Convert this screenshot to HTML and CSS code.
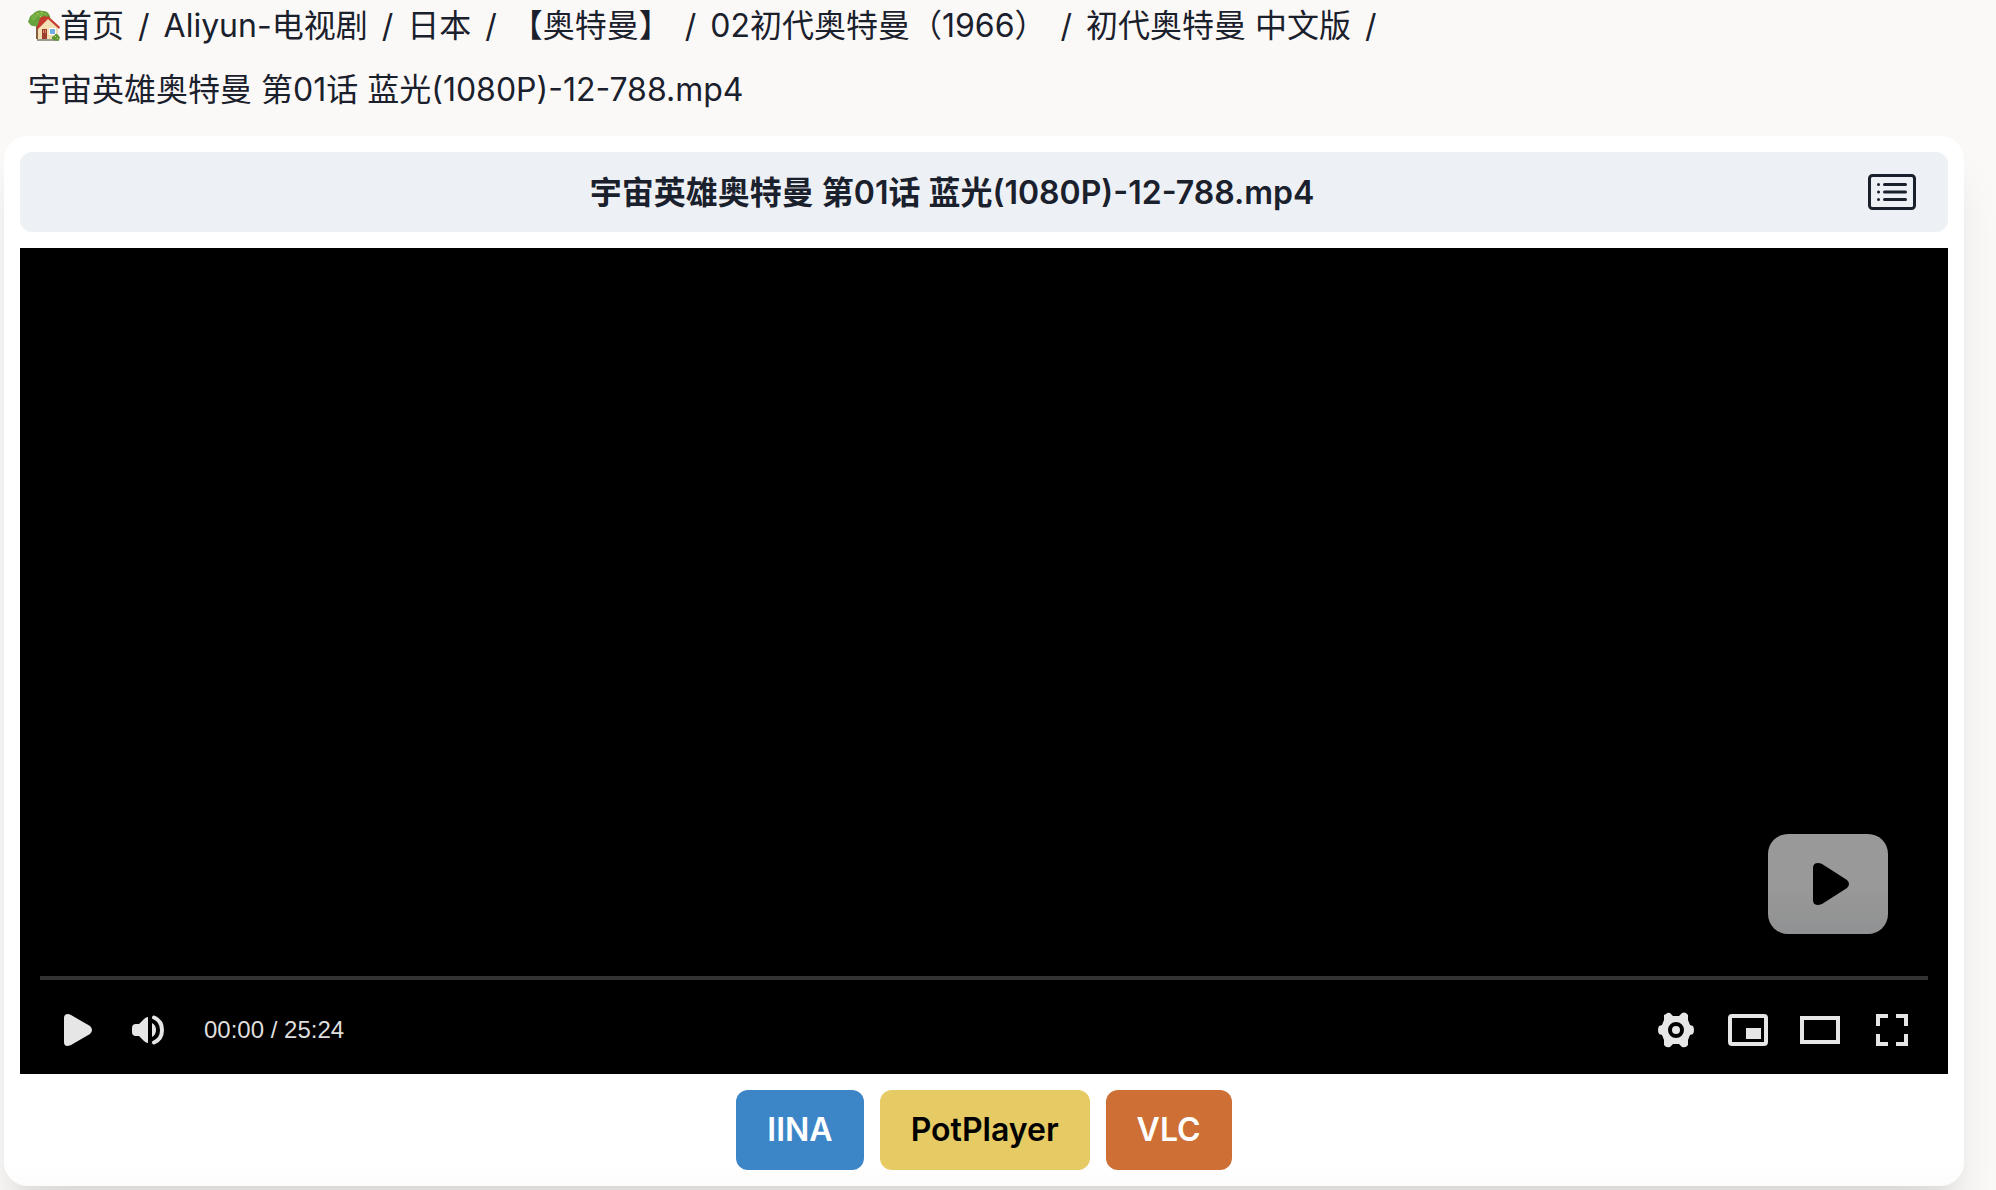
FILE: index.html
```html
<!DOCTYPE html>
<html lang="zh-CN">
<head>
<meta charset="utf-8">
<meta name="viewport" content="width=device-width, initial-scale=1">
<title>宇宙英雄奥特曼 第01话</title>
<link rel="stylesheet" href="styles.css">
</head>
<body>
<nav class="breadcrumb" aria-label="面包屑">
  <ol class="crumbs">
    <li class="crumb"><a href="#"><svg class="house" viewBox="0 0 32 32" aria-hidden="true">
      <path fill="#865a3b" d="M8 15h4v14H8z"/>
      <path fill="#67a33d" d="M1 10Q1 6 5 4Q9-1 15 1Q20 1 22 6Q23 11 19 13Q14 12 9 16Q3 17 1 13Q-1 11 1 10z"/>
      <path fill="#78b045" d="M5 5Q11 0 17 3Q14 7 9 7Q7 12 4 10Q2 8 5 5z"/>
      <path fill="#f2be4d" d="M9 3h1v1H9zM13 2h1v1h-1zM17 4h1v1h-1zM12 6h1v1h-1z"/>
      <path fill="#f4dfb5" d="M10 17L20 8l10 9v12H10z"/>
      <path fill="#c63b2d" d="M12 8l4-2 3 1 1-1 12 11-1 2L20 9 10 19l-1-2z"/>
      <path fill="#9d3f2d" d="M14 19h5v10h-5z"/>
      <path fill="#d98969" d="M15 20h1v3h-1zM17 20h1v3h-1z"/>
      <path fill="#fff" d="M21 18h7v7h-7z"/>
      <path fill="#72afe0" d="M22 19h5v5h-5z"/>
      <path fill="#9a9b8c" d="M9 29h22v2H9z"/>
      <path fill="#5c9838" d="M24 29q-1-3 2-3 2-4 4-1 3 2 1 5-3 2-7-1z"/>
      <path fill="#efc95c" d="M27 26h1v1h-1zM29 28h1v1h-1z"/>
    </svg>首页</a><span class="slash">/</span></li>
    <li class="crumb"><a href="#">Aliyun-电视剧</a><span class="slash">/</span></li>
    <li class="crumb"><a href="#">日本</a><span class="slash">/</span></li>
    <li class="crumb"><a href="#">【奥特曼】</a><span class="slash">/</span></li>
    <li class="crumb"><a href="#">02初代奥特曼（1966）</a><span class="slash">/</span></li>
    <li class="crumb"><a href="#">初代奥特曼 中文版</a><span class="slash">/</span></li>
    <li class="crumb"><a href="#" aria-current="page">宇宙英雄奥特曼 第01话 蓝光(1080P)-12-788.mp4</a></li>
  </ol>
</nav>
<main class="card">
  <header class="titlebar">
    <h1 class="title">宇宙英雄奥特曼 第01话 蓝光(1080P)-12-788.mp4</h1>
    <button class="icon-button list-button" type="button" aria-label="播放列表">
      <svg width="48" height="36" viewBox="0 0 48 36" fill="none" stroke="#1a202c" stroke-width="3" stroke-linecap="round">
        <rect x="1.500" y="1.500" width="45" height="33" rx="3"/>
        <path d="M16.500 10.500h21M16.500 18h21M16.500 25.500h21M10.500 10.500h.01M10.500 18h.01M10.500 25.500h.01"/>
      </svg>
    </button>
  </header>
  <section class="player" aria-label="视频播放器">
    <button class="icon-button big-play" type="button" aria-label="播放视频">
      <svg width="36" height="42" viewBox="0 0 36 42"><path d="M0 5Q0 0 5 0Q7 0 9 1L34 17Q38 21 34 25L9 41Q0 44 0 37z"/></svg>
    </button>
    <div class="progress"></div>
    <div class="controls">
      <button class="icon-button control" type="button" aria-label="播放">
        <svg class="play-icon" width="28" height="32" viewBox="0 0 28 32"><path d="M0 4Q0 0 4 0Q5 0 7 1L26 12Q30 16 26 20L7 31Q0 34 0 28z"/></svg>
      </button>
      <button class="icon-button control" type="button" aria-label="音量">
        <svg width="32" height="30" viewBox="0 0 32 30"><path d="M16 2v26q-2 0-4-2l-5-5H4q-4 0-4-4v-4q0-4 4-4h3l5-5q2-2 4-2zM20 8q4 2 4 7t-4 7z"/><path fill="none" stroke="#e6e6e6" stroke-width="4" stroke-linecap="round" d="M22 2.500Q30 6 30 15T22 27.500"/></svg>
      </button>
      <span class="time">00:00 / 25:24</span>
      <button class="icon-button control" type="button" aria-label="设置">
        <svg width="36" height="36" viewBox="0 0 36 36"><path fill-rule="evenodd" d="M8 2Q10 0 12 1L15 4h6l3-3q2-1 4 0l2 2v5l2 5 3 1q2 4 0 8l-3 1-2 5v5q-2 3-6 2l-3-3h-6l-3 3q-4 1-6-2v-5l-2-5-3-1q-2-4 0-8l3-1 2-5V3zM18 10a8 8 0 1 0 0 16a8 8 0 0 0 0-16z"/><circle cx="18" cy="18" r="4"/></svg>
      </button>
      <button class="icon-button control" type="button" aria-label="画中画">
        <svg width="40" height="32" viewBox="0 0 40 32"><rect x="2" y="2" width="36" height="28" rx="2" fill="none" stroke="#e6e6e6" stroke-width="4"/><path d="M18 14h15v11H18z"/></svg>
      </button>
      <button class="icon-button control" type="button" aria-label="网页全屏">
        <svg width="40" height="28" viewBox="0 0 40 28"><path fill="none" stroke="#e6e6e6" stroke-width="4" d="M2 2h36v24H2z"/></svg>
      </button>
      <button class="icon-button control" type="button" aria-label="全屏">
        <svg width="32" height="32" viewBox="0 0 32 32"><path fill="none" stroke="#e6e6e6" stroke-width="4" d="M12 2H2v10M20 2h10v10M12 30H2V20M20 30h10V20"/></svg>
      </button>
    </div>
  </section>
  <div class="apps">
    <button class="app iina" type="button">IINA</button>
    <button class="app potplayer" type="button">PotPlayer</button>
    <button class="app vlc" type="button">VLC</button>
  </div>
</main>
</body>
</html>
```

FILE: styles.css
```css
* { box-sizing: border-box; }

body {
  margin: 0;
  background: #faf9f7;
  color: #1a202c;
  font: 32px/48px Inter, "Noto Sans CJK SC", sans-serif;
  overflow-x: hidden;
}

a { color: inherit; text-decoration: none; }

.breadcrumb { padding: 2px 28px 22px; }

.crumbs {
  display: flex;
  flex-wrap: wrap;
  row-gap: 16px;
  margin: 0;
  padding: 0;
  list-style: none;
}

.crumb { display: flex; }

.crumb a { display: flex; align-items: center; white-space: pre; }

.house { width: 32px; height: 32px; }

.slash { margin: 0 14px; }

.card {
  display: flex;
  flex-direction: column;
  gap: 16px;
  margin: 0 32px 4px 4px;
  padding: 16px;
  border-radius: 24px;
  background: linear-gradient(to top, #fcfcfc, #fff 24px);
  box-shadow: 0 40px 50px -10px rgba(0, 0, 0, 0.1), 0 20px 20px -10px rgba(0, 0, 0, 0.04);
}

.titlebar {
  display: flex;
  align-items: center;
  height: 80px;
  padding: 0 32px 0 16px;
  border-radius: 12px;
  background: #edf1f6;
}

.title {
  flex: 1;
  margin: 0;
  padding-top: 2px;
  font-size: 32px;
  font-weight: 600;
  text-align: center;
}

.icon-button {
  display: flex;
  align-items: center;
  justify-content: center;
  padding: 0;
  border: 0;
  background: none;
  cursor: pointer;
}

.player {
  display: flex;
  flex-direction: column;
  justify-content: flex-end;
  aspect-ratio: 7 / 3;
  padding: 0 20px 6px;
  background: #000;
}

.big-play {
  align-self: flex-end;
  width: 120px;
  height: 100px;
  margin: 0 40px 42px 0;
  padding-left: 6px;
  border-radius: 20px;
  background: linear-gradient(#999, #999 50%, #909192);
}

.progress { height: 4px; background: #333; }

.controls {
  display: flex;
  align-items: center;
  height: 76px;
  margin-top: 12px;
}

.control { width: 72px; height: 76px; fill: #e6e6e6; }

.play-icon { margin-left: 4px; }

.time {
  margin: 0 auto 0 20px;
  color: #dedede;
  font: 24px/32px "Liberation Sans", sans-serif;
}

.apps { display: flex; justify-content: center; gap: 16px; }

.app {
  height: 80px;
  padding: 0 31px;
  border: 0;
  border-radius: 12px;
  color: #fff;
  font: 600 32px/48px Inter, sans-serif;
  cursor: pointer;
}

.iina { background: #3c86c7; }
.potplayer { background: #e6ca63; color: #000; }
.vlc { background: #ce7035; }
```
